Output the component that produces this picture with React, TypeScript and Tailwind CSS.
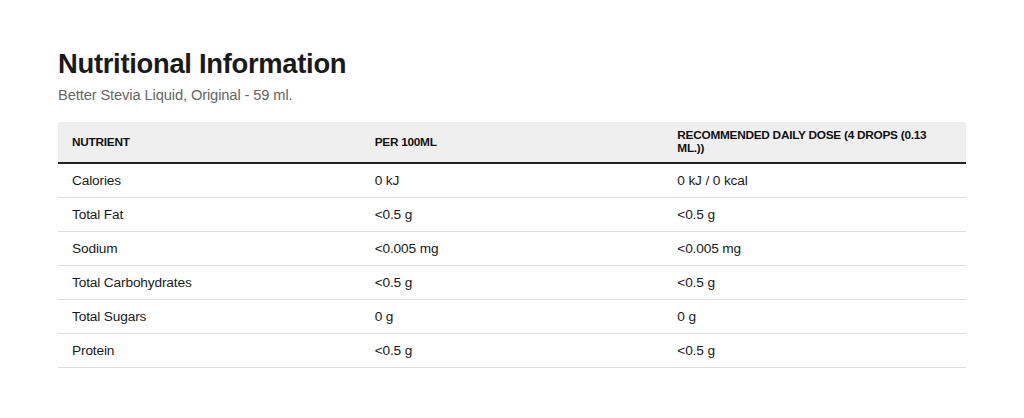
import React from "react";

const rows = [
  ["Calories", "0 kJ", "0 kJ / 0 kcal"],
  ["Total Fat", "<0.5 g", "<0.5 g"],
  ["Sodium", "<0.005 mg", "<0.005 mg"],
  ["Total Carbohydrates", "<0.5 g", "<0.5 g"],
  ["Total Sugars", "0 g", "0 g"],
  ["Protein", "<0.5 g", "<0.5 g"],
];

export default function App() {
  return (
    <div className="min-h-[418px] bg-white px-[58px] pt-[47px] font-['Liberation_Sans',Arial,sans-serif]">
      <h1 className="text-[27.4px] font-bold leading-[34px] tracking-[-0.3px] text-[#1a1a1a]">Nutritional Information</h1>
      <p className="mt-[5px] text-[14.7px] leading-[18px] tracking-[-0.12px] text-[#666666]">Better Stevia Liquid, Original - 59 ml.</p>
      <table className="mt-[18px] w-full table-fixed border-collapse">
        <thead>
          <tr className="bg-[#efefef] border-b-2 border-[#222222]">
            <th className="h-[40px] px-[14px] py-[7px] text-left align-middle text-[11.8px] font-bold uppercase leading-[13px] tracking-[-0.25px] text-[#111111]">Nutrient</th>
            <th className="h-[40px] px-[14px] py-[7px] text-left align-middle text-[11.8px] font-bold uppercase leading-[13px] tracking-[-0.25px] text-[#111111]">Per 100ml</th>
            <th className="h-[40px] px-[14px] py-[7px] pr-[30px] text-left align-middle text-[11.8px] font-bold uppercase leading-[13px] tracking-[-0.25px] text-[#111111]">Recommended Daily Dose (4 drops (0.13 ml.))</th>
          </tr>
        </thead>
        <tbody>
          {rows.map((r) => (
            <tr key={r[0]} className="border-b border-[#dddddd]">
              {r.map((c, i) => (
                <td key={i} className="px-[14px] py-[8px] text-[13.7px] leading-[17px] tracking-[-0.15px] text-[#1a1a1a]">{c}</td>
              ))}
            </tr>
          ))}
        </tbody>
      </table>
    </div>
  );
}
